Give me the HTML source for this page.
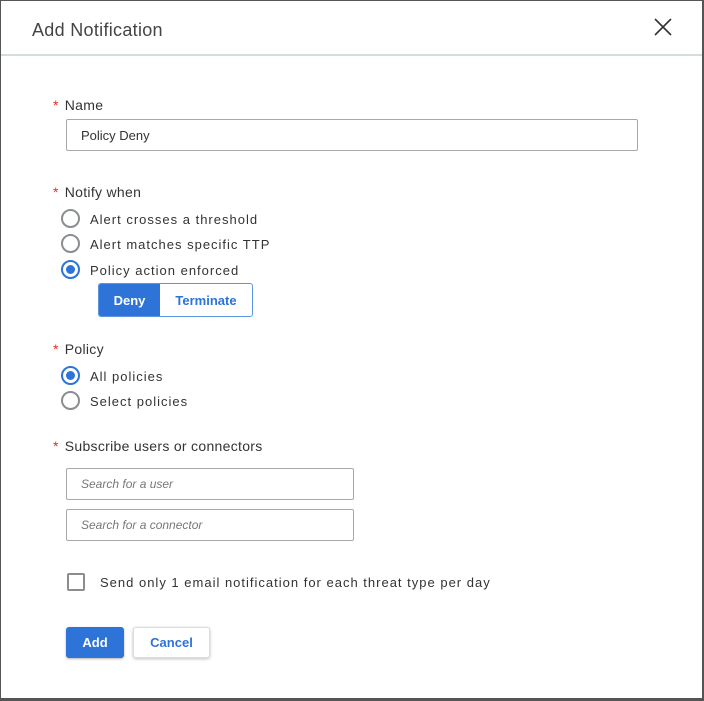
<!DOCTYPE html>
<html><head><style>
*{margin:0;padding:0;box-sizing:border-box}
body{width:704px;height:701px;background:#fff;font-family:"Liberation Sans",sans-serif;position:relative;overflow:hidden;color:#333}
.frame{position:absolute;left:0;top:0;width:704px;height:701px;border:1px solid #555;border-bottom:3px solid #555;border-right:2px solid #555}
.a{position:absolute;white-space:nowrap}
.lbl{font-size:14px;color:#333;letter-spacing:0.3px}
.st{color:#e0302b;margin-right:6px}
.opt{font-size:13px;letter-spacing:1px;color:#333}
.radio{position:absolute;width:19px;height:19px;border:2px solid #8a8e91;border-radius:50%}
.radio.on{border-color:#2d73d8}
.radio.on::after{content:"";position:absolute;left:3px;top:3px;width:9px;height:9px;border-radius:50%;background:#2d73d8}
.inp{position:absolute;border:1px solid #a6a9ab;border-radius:2px;height:32px;font-size:13px;padding-left:14px;line-height:31px}
.ph{font-style:italic;color:#777;font-size:12px}
</style></head><body>
<div class="frame"></div>
<div class="a" style="left:32px;top:20px;font-size:18px;color:#444;letter-spacing:0.3px">Add Notification</div>
<svg class="a" style="left:653px;top:17px" width="20" height="20"><path d="M2 2L18 18M18 2L2 18" stroke="#333" stroke-width="1.6"/></svg>
<div class="a" style="left:1px;top:54px;width:701px;height:2px;background:#d5dcdc"></div>

<div class="a lbl" style="left:53px;top:97px"><span class="st">*</span>Name</div>
<div class="inp" style="left:66px;top:119px;width:572px">Policy Deny</div>

<div class="a lbl" style="left:53px;top:184px"><span class="st">*</span>Notify when</div>
<div class="radio" style="left:61px;top:209px"></div><div class="a opt" style="left:90px;top:212px">Alert crosses a threshold</div>
<div class="radio" style="left:61px;top:234px"></div><div class="a opt" style="left:90px;top:237px">Alert matches specific TTP</div>
<div class="radio on" style="left:61px;top:260px"></div><div class="a opt" style="left:90px;top:263px">Policy action enforced</div>
<div class="a" style="left:98px;top:283px;width:155px;height:34px;border:1px solid #5b95e0;border-radius:3px;overflow:hidden">
<div class="a" style="left:0;top:0;width:61px;height:32px;background:#2d73d8;color:#fff;font-weight:bold;font-size:13px;text-align:center;line-height:33px">Deny</div>
<div class="a" style="left:61px;top:0;width:92px;height:32px;color:#2d73d8;font-weight:bold;font-size:13px;text-align:center;line-height:33px">Terminate</div>
</div>

<div class="a lbl" style="left:53px;top:341px"><span class="st">*</span>Policy</div>
<div class="radio on" style="left:61px;top:366px"></div><div class="a opt" style="left:90px;top:369px">All policies</div>
<div class="radio" style="left:61px;top:391px"></div><div class="a opt" style="left:90px;top:394px">Select policies</div>

<div class="a lbl" style="left:53px;top:438px"><span class="st">*</span>Subscribe users or connectors</div>
<div class="inp ph" style="left:66px;top:468px;width:288px">Search for a user</div>
<div class="inp ph" style="left:66px;top:509px;width:288px">Search for a connector</div>

<div class="a" style="left:67px;top:573px;width:18px;height:18px;border:2px solid #8a8e91;border-radius:2px"></div>
<div class="a opt" style="left:100px;top:575px">Send only 1 email notification for each threat type per day</div>

<div class="a" style="left:66px;top:627px;width:58px;height:31px;background:#2d73d8;border-radius:3px;color:#fff;font-weight:bold;font-size:13px;text-align:center;line-height:31px;box-shadow:0 1px 2px rgba(0,0,0,.3)">Add</div>
<div class="a" style="left:133px;top:627px;width:77px;height:31px;background:#fff;border:1px solid #ddd;border-radius:3px;color:#2d73d8;font-weight:bold;font-size:13px;text-align:center;line-height:29px;box-shadow:0 1px 3px rgba(0,0,0,.25)">Cancel</div>
</body></html>
